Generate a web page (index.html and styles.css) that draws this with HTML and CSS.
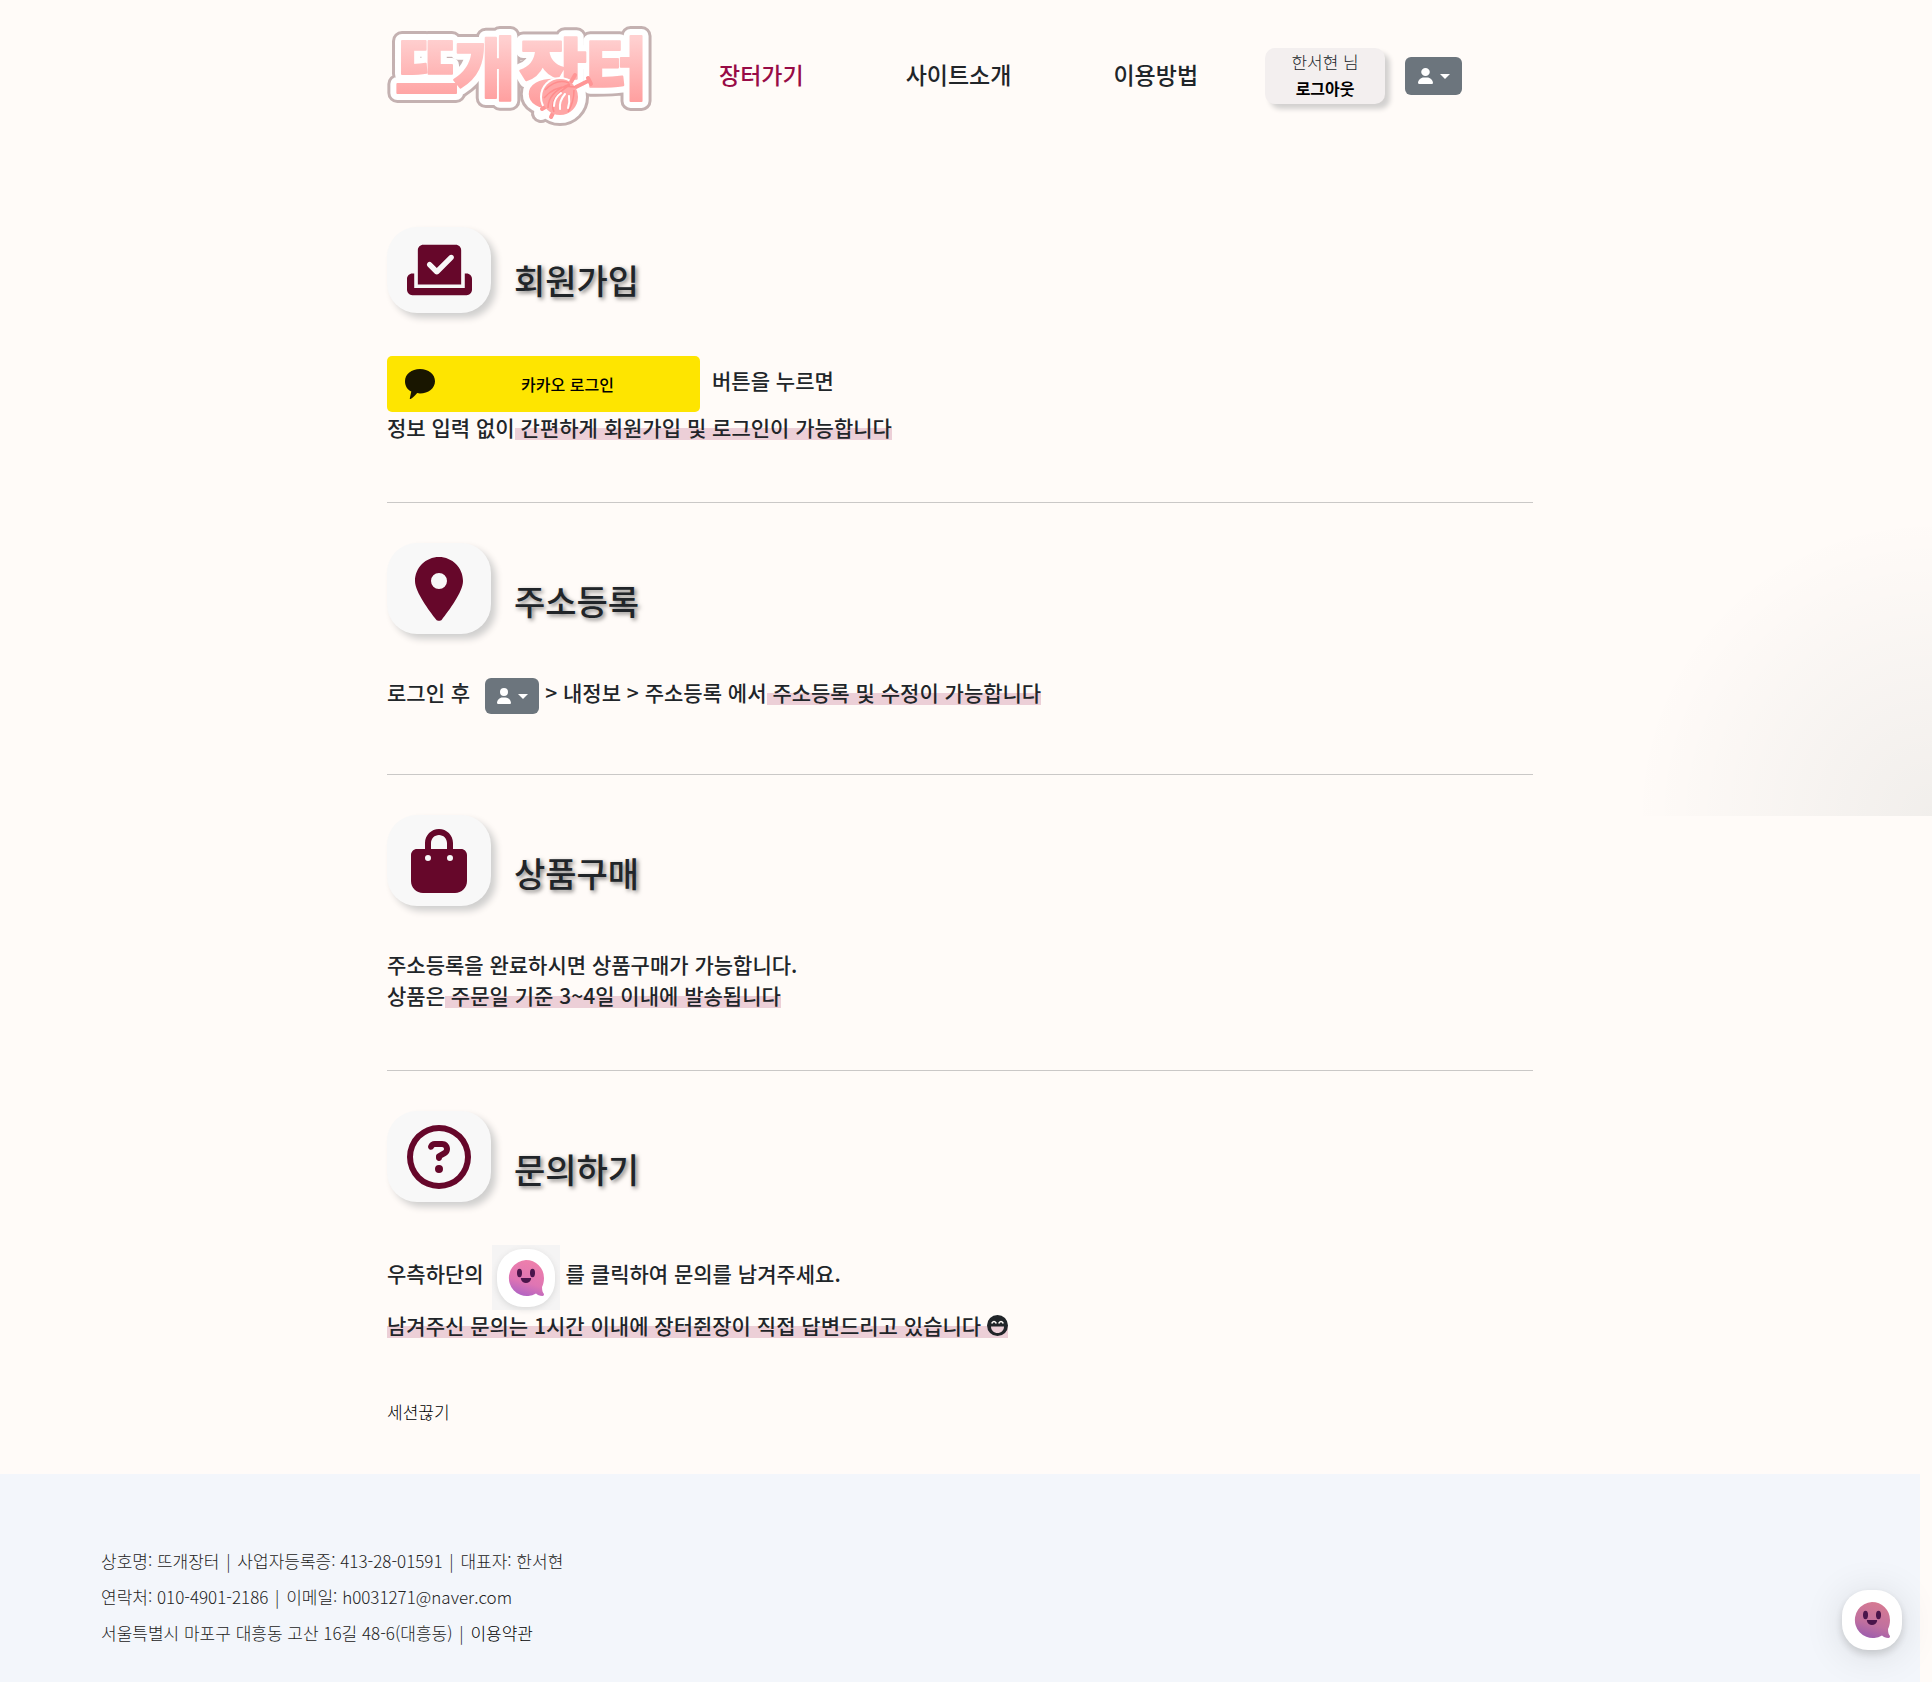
FILE: index.html
```html
<!DOCTYPE html>
<html lang="ko">
<head>
<meta charset="utf-8">
<meta name="viewport" content="width=device-width, initial-scale=1">
<title>뜨개장터 - 이용방법</title>
<link rel="stylesheet" href="styles.css">
</head>
<body>
<svg class="defs" width="0" height="0" aria-hidden="true">
  <defs>
    <linearGradient id="pink" gradientUnits="userSpaceOnUse" x1="0" y1="38" x2="0" y2="102"><stop offset="0" stop-color="#ffd0d0"/><stop offset="1" stop-color="#ff9f9f"/></linearGradient>
    <linearGradient id="face" x1=".6" y1="0" x2=".3" y2="1"><stop offset="0" stop-color="#ee7fab"/><stop offset=".6" stop-color="#df75b3"/><stop offset="1" stop-color="#ad62c4"/></linearGradient>
    <linearGradient id="face-dim" x1=".6" y1="0" x2=".3" y2="1"><stop offset="0" stop-color="#d67a92"/><stop offset=".6" stop-color="#c0709f"/><stop offset="1" stop-color="#9a5cae"/></linearGradient>
    <symbol id="user" viewBox="0 0 448 512" preserveAspectRatio="none"><path d="M224 256A128 128 0 1 0 224 0a128 128 0 1 0 0 256zm-45.700 48C79.800 304 0 383.800 0 482.300C0 498.700 13.300 512 29.700 512H418.300c16.400 0 29.700-13.300 29.700-29.700C448 383.800 368.200 304 269.700 304H178.300z"/></symbol>
    <symbol id="smile" viewBox="0 0 36 36"><path d="M18 0a18 18 0 0 1 18 18c0 4-1 7-2 9 0 4 1 6 2 7 0 1-.5 2-1.500 2-3 0-5-1-6.500-2.500A18 18 0 1 1 18 0z"/><g fill="#4a154b"><ellipse cx="11.500" cy="13" rx="2.500" ry="4.200"/><ellipse cx="24.500" cy="13" rx="2.500" ry="4.200"/><path d="M13.500 18h9c.5 0 .8.500.6 1-.7 2.500-2.600 4-5.100 4s-4.400-1.500-5.100-4c-.2-.5.1-1 .6-1z"/></g></symbol>
  </defs>
</svg>

<div class="glow"></div>

<header class="header">
  <a class="logo" href="#" aria-label="뜨개장터">
    <svg width="280" height="152" viewBox="0 0 280 152" aria-hidden="true">
      <g class="logo-rim">
        <text x="8" y="94" font-size="69">뜨</text><text x="66" y="94" font-size="68">개</text><text x="132" y="100" font-size="74">장</text><text x="198" y="94" font-size="68">터</text><circle cx="173" cy="97" r="19"/><path d="M162 108l-8 5"/>
      </g>
      <g class="logo-white">
        <text x="8" y="94" font-size="69">뜨</text><text x="66" y="94" font-size="68">개</text><text x="132" y="100" font-size="74">장</text><text x="198" y="94" font-size="68">터</text><circle cx="173" cy="97" r="19"/><path d="M162 108l-8 5"/>
      </g>
      <g class="logo-fill">
        <text x="8" y="94" font-size="69">뜨</text><text x="66" y="94" font-size="68">개</text><text x="132" y="100" font-size="74">장</text><text x="198" y="94" font-size="68">터</text>
      </g>
      <circle cx="173" cy="97" r="20" fill="#fff"/>
      <g fill="none" stroke="#ff9696" stroke-width="4" stroke-linecap="round"><path d="M189 87l12-6M201 78l3 6M160 106l-5 3M167 111l-3 6M184 82l4-7"/></g>
      <circle cx="173" cy="97" r="18" fill="#ffa6a6"/>
      <g fill="none" stroke="#ff8d8d" stroke-width="1.500"><path d="M158 90q12-12 24-7M157 98q12-14 31-11M161 108q0-16 22-24M167 112q-6-14 16-27M181 112q6-10 6-22"/></g>
      <g fill="none" stroke="#fff" stroke-width="2" stroke-linecap="round"><path d="M167 106q0-8 7-13M173 109q-1-8 5-15M181 108q2-6 1-12"/></g>
    </svg>
  </a>
  <nav class="nav">
    <a class="active" href="#">장터가기</a>
    <a href="#">사이트소개</a>
    <a href="#">이용방법</a>
  </nav>
  <div class="account">
    <span>한서현 님</span>
    <button type="button" class="logout">로그아웃</button>
  </div>
  <button type="button" class="user-menu" aria-label="내 메뉴"><svg width="15" height="16"><use href="#user"/></svg><i class="caret"></i></button>
</header>

<main class="guide">
  <section>
    <div class="title">
      <span class="tile tile-low"><svg width="65" height="58" viewBox="0 0 576 512"><path fill-rule="evenodd" d="M96 80c0-26.500 21.500-48 48-48H432c26.500 0 48 21.500 48 48V384H96V80zm313 47c-9.400-9.400-24.600-9.400-33.900 0l-111 111-47-47c-9.400-9.400-24.600-9.400-33.900 0s-9.400 24.600 0 33.900l64 64c9.400 9.400 24.600 9.400 33.900 0L409 161c9.400-9.400 9.400-24.600 0-33.900zM0 336c0-26.500 21.500-48 48-48H64V416H512V288h16c26.500 0 48 21.500 48 48v96c0 26.500-21.500 48-48 48H48c-26.500 0-48-21.500-48-48V336z"/></svg></span>
      <h2>회원가입</h2>
    </div>
    <div class="row">
      <button type="button" class="kakao"><svg width="30" height="30" viewBox="0 0 32 32"><path d="M16 0c9 0 16 5.500 16 13s-7 13-16 13l-3-.3C11 28 8 31 6 32c-1 .3-1-.5-.8-1l1.500-7C2.500 22 0 18 0 13 0 5.500 7 0 16 0z"/></svg><span>카카오 로그인</span></button>
      <p class="lift after-button">버튼을 누르면</p>
    </div>
    <p>정보 입력 없이<mark> 간편하게 회원가입 및 로그인이 가능합니다</mark></p>
  </section>

  <section>
    <div class="title">
      <span class="tile"><svg width="48" height="64" viewBox="0 0 384 512"><path fill-rule="evenodd" d="M215.700 499.200C267 435 384 279.400 384 192C384 86 298 0 192 0S0 86 0 192c0 87.400 117 243 168.300 307.200c12.300 15.300 35.100 15.300 47.400 0zM192 128a64 64 0 1 1 0 128 64 64 0 1 1 0-128z"/></svg></span>
      <h2>주소등록</h2>
    </div>
    <div class="row row-top">
      <p>로그인 후</p>
      <span class="user-menu mini"><svg width="14" height="16"><use href="#user"/></svg><i class="caret"></i></span>
      <p>&gt; 내정보 &gt; 주소등록 에서<mark> 주소등록 및 수정이 가능합니다</mark></p>
    </div>
  </section>

  <section>
    <div class="title">
      <span class="tile"><svg width="56" height="64" viewBox="0 0 448 512"><path fill-rule="evenodd" d="M160 112c0-35.300 28.700-64 64-64s64 28.700 64 64v48H160V112zm-48 48H48c-26.500 0-48 21.500-48 48V416c0 53 43 96 96 96H352c53 0 96-43 96-96V208c0-26.500-21.500-48-48-48H336V112C336 50.100 285.900 0 224 0S112 50.100 112 112v48zm24 48a24 24 0 1 1 0 48 24 24 0 1 1 0-48zm152 24a24 24 0 1 1 48 0 24 24 0 1 1 -48 0z"/></svg></span>
      <h2>상품구매</h2>
    </div>
    <p>주소등록을 완료하시면 상품구매가 가능합니다.</p>
    <p>상품은<mark> 주문일 기준 3~4일 이내에 발송됩니다</mark></p>
  </section>

  <section>
    <div class="title">
      <span class="tile"><svg width="64" height="64" viewBox="0 0 512 512"><path d="M464 256A208 208 0 1 0 48 256a208 208 0 1 0 416 0zM0 256a256 256 0 1 1 512 0A256 256 0 1 1 0 256zm169.800-90.700c7.900-22.300 29.100-37.300 52.800-37.300h58.300c34.900 0 63.100 28.300 63.100 63.100c0 22.600-12.100 43.500-31.700 54.800L280 264.400c-.2 13-10.900 23.600-24 23.600c-13.300 0-24-10.700-24-24V250.500c0-8.600 4.600-16.500 12.100-20.800l44.300-25.400c4.700-2.700 7.600-7.700 7.600-13.100c0-8.400-6.800-15.100-15.100-15.100H222.600c-3.400 0-6.400 2.100-7.500 5.300l-.4 1.200c-4.400 12.500-18.200 19-30.600 14.600s-19-18.200-14.600-30.600l.4-1.200zM224 352a32 32 0 1 1 64 0 32 32 0 1 1 -64 0z"/></svg></span>
      <h2>문의하기</h2>
    </div>
    <div class="row">
      <p class="lift">우측하단의</p>
      <span class="chat-thumb"><span><svg width="36" height="36" fill="url(#face)"><use href="#smile"/></svg></span></span>
      <p class="lift">를 클릭하여 문의를 남겨주세요.</p>
    </div>
    <p><mark>남겨주신 문의는 1시간 이내에 장터쥔장이 직접 답변드리고 있습니다 <svg class="laugh" width="21" height="21" viewBox="0 0 21 21"><circle cx="10.500" cy="10.500" r="10.500" fill="#212529"/><path d="M4 11.500h13c0 4-3 6.500-6.500 6.500S4 15.500 4 11.500z" fill="#eccfd7"/><path d="M5 8q2-3 4 0M12 8q2-3 4 0" fill="none" stroke="#fffbf8" stroke-width="1.500" stroke-linecap="round"/></svg></mark></p>
  </section>
  <a class="session" href="#">세션끊기</a>
</main>

<footer class="footer">
  <p>상호명: 뜨개장터 <i>|</i> 사업자등록증: 413-28-01591 <i>|</i> 대표자: 한서현</p>
  <p>연락처: 010-4901-2186 <i>|</i> 이메일: h0031271@naver.com</p>
  <p>서울특별시 마포구 대흥동 고산 16길 48-6(대흥동) <i>|</i> <a href="#">이용약관</a></p>
</footer>

<button type="button" class="chat" aria-label="문의 채팅 열기"><svg width="36" height="36" fill="url(#face-dim)"><use href="#smile"/></svg></button>
</body>
</html>
```

FILE: styles.css
```css
* { box-sizing: border-box; }

body {
  margin: 0;
  padding-right: 12px;
  background: #fffbf8;
  color: #212529;
  font-family: "Noto Sans CJK KR", "Noto Sans", sans-serif;
  font-size: 21px;
  font-weight: 500;
  line-height: 31px;
}

p, h2 { margin: 0; }
a { color: inherit; text-decoration: none; }
button { border: 0; padding: 0; font: inherit; cursor: pointer; }
svg { display: block; flex: none; }
.defs { position: absolute; }

.glow {
  position: absolute;
  top: 516px;
  right: 0;
  width: 300px;
  height: 300px;
  background: radial-gradient(circle 300px at bottom right, rgba(0, 20, 20, .055), transparent);
}

.header,
.guide {
  max-width: 1146px;
  margin: 0 auto;
}

.header {
  display: flex;
  align-items: center;
  height: 152px;
}

.logo-rim, .logo-white, .logo-fill { font-weight: 900; stroke-linejoin: round; stroke-linecap: round; }
.logo-rim { fill: #c4b1b1; stroke: #c4b1b1; stroke-width: 20px; }
.logo-white { fill: #fff; stroke: #fff; stroke-width: 14px; }
.logo-fill { fill: url(#pink); stroke: url(#pink); stroke-width: 2px; }

.nav {
  display: flex;
  gap: 102px;
  margin: 0 67px 0 52px;
  padding-bottom: 3px;
  font-size: 23px;
  white-space: nowrap;
}
.nav .active { color: #980b46; }

.account {
  display: flex;
  flex-direction: column;
  align-items: center;
  width: 120px;
  height: 56px;
  padding: 1px 0;
  border-radius: 10px;
  background: #f3efef;
  box-shadow: 5px 5px 5px #d3d1d0;
  font-size: 17px;
  font-weight: 300;
  line-height: 26px;
}
.logout {
  background: none;
  color: #000;
  font-size: 16px;
  font-weight: 700;
  line-height: 26px;
}

.user-menu {
  display: flex;
  flex: none;
  align-items: center;
  justify-content: center;
  gap: 7px;
  width: 57px;
  height: 38px;
  margin-left: 20px;
  border-radius: 6px;
  background: #6c757d;
  fill: #fff;
}
.user-menu.mini {
  width: 54px;
  height: 36px;
  margin: 1px 6px 1px 15px;
}
.caret {
  border: 5px solid transparent;
  border-top-color: #fff;
  border-bottom: 0;
}

.guide { padding-top: 75px; }
.guide section + section {
  padding-top: 40px;
  border-top: 1px solid #cac8c7;
}
.guide section { padding-bottom: 59px; }

.title {
  display: flex;
  align-items: flex-end;
  gap: 23px;
  margin-bottom: 43px;
}
.title h2 {
  padding-bottom: 13px;
  font-size: 34px;
  font-weight: 500;
  line-height: 40px;
  text-shadow: 2px 2px 4px rgba(0, 0, 0, .5);
}
.tile {
  display: flex;
  align-items: center;
  justify-content: center;
  width: 104px;
  height: 91px;
  border-radius: 30px;
  background: #f8f8f8;
  box-shadow: 5px 5px 7px #d0cfce;
  fill: #66072a;
}
.tile-low { height: 86px; }

.row { display: flex; align-items: center; }
.row-top { align-items: flex-start; }
.lift { padding-bottom: 8px; }

mark {
  background: linear-gradient(transparent 16px, #eccfd7 16px, #eccfd7 28px, transparent 28px);
  color: inherit;
}

.kakao {
  display: flex;
  align-items: center;
  width: 313px;
  height: 56px;
  padding: 0 18px;
  border-radius: 5px;
  background: #fee500;
  color: #000;
  fill: #191600;
  font-size: 16px;
}
.kakao span { flex: 1; padding-left: 18px; }
.after-button { margin-left: 12px; }

.chat-thumb {
  display: flex;
  align-items: center;
  justify-content: center;
  width: 68px;
  height: 65px;
  margin: 0 6px 0 8px;
  background: #f5f4f4;
}
.chat-thumb span,
.chat {
  display: flex;
  align-items: center;
  justify-content: center;
  border-radius: 26px;
  background: #fff;
}
.chat-thumb span {
  width: 58px;
  height: 58px;
  box-shadow: 0 2px 6px #d8d8d8;
}
.laugh { display: inline-block; vertical-align: -2px; }

.session {
  display: inline-block;
  margin-bottom: 50px;
  color: #000;
  font-size: 17px;
  font-weight: 300;
  line-height: 24px;
  vertical-align: top;
}

.footer {
  padding: 69px 101px 31px;
  background: #f3f6fb;
  color: #222;
  font-size: 17px;
  font-weight: 300;
  line-height: 36px;
}
.footer i { margin: 0 2px; font-style: normal; }
.footer a { color: #000; }

.chat {
  position: fixed;
  right: 30px;
  bottom: 32px;
  width: 60px;
  height: 60px;
  box-shadow: 0 4px 8px rgba(0, 0, 0, .15), 0 4px 40px rgba(0, 0, 0, .12);
}
```
